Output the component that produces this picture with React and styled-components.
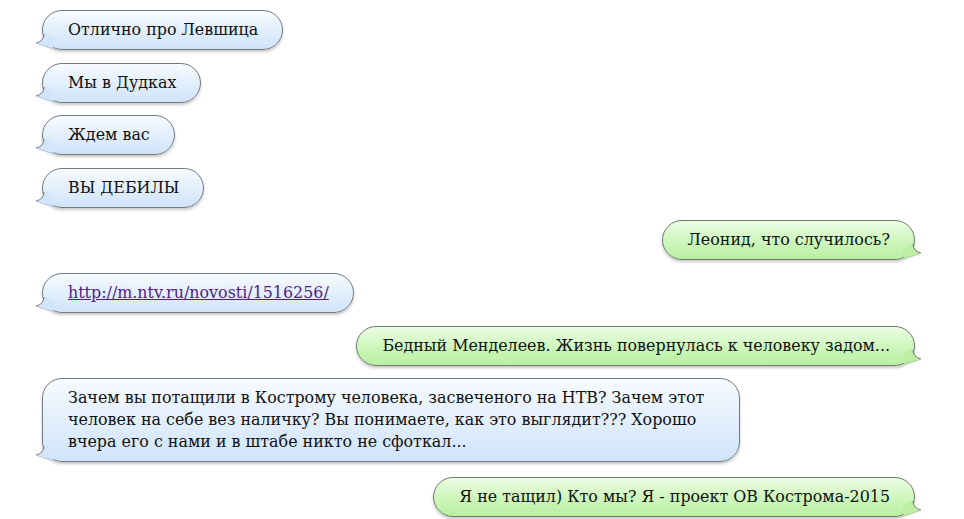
import React from "react";
import styled, {createGlobalStyle, css} from "styled-components";

const GlobalStyle = createGlobalStyle`
  html, body {
    margin: 0;
    padding: 0;
    background: #ffffff;
  }
`;

const Chat = styled.div`
  width: 964px;
  box-sizing: border-box;
  padding: 10px 49px 0 42px;
  display: flex;
  flex-direction: column;
  font-family: "DejaVu Serif", "Liberation Serif", serif;
  font-size: 15.9px;
  color: #111;
`;

const Row = styled.div`
  display: flex;
  justify-content: ${({$mine}) => ($mine ? "flex-end" : "flex-start")};
  margin-bottom: ${({$last}) => ($last ? "15px" : "12.6px")};
`;

const Bubble = styled.div`
  position: relative;
  box-sizing: border-box;
  min-width: ${({$minWidth}) => $minWidth || "0"};
  padding: 8px 24px 8px 25px;
  line-height: 22px;
  white-space: pre-line;
  border: 1px solid #757a80;
  border-radius: 20px;
  box-shadow: 0 2px 3px rgba(0, 0, 0, 0.22);

  ${({$mine}) =>
    $mine
      ? css`
          background: linear-gradient(to bottom, #ecfde4 0%, #d2f7c2 45%, #b9efa0 100%);
          border-color: #6f7a6c;
        `
      : css`
          background: linear-gradient(to bottom, #f8fbff 0%, #e4f0fd 45%, #d0e4fa 100%);
        `}

  a {
    color: #551a8b;
    text-decoration: underline;
  }
`;

const TailSvg = styled.svg`
  position: absolute;
  bottom: -1px;
  width: 24px;
  height: 16px;
  overflow: visible;
  ${({$mine}) =>
    $mine
      ? css`
          right: -8px;
          transform: scaleX(-1);
        `
      : css`
          left: -8px;
        `}
`;

const Tail = ({mine}) => {
  const fill = mine ? "#bcefa4" : "#d2e5fa";
  const line = mine ? "#6f7a6c" : "#757a80";
  return (
    <TailSvg $mine={mine} viewBox="0 0 24 16">
      <path d="M9 0 Q9 7 1 9 Q8 12 18 14.5 L20 6 L12 0 Z" fill={fill} />
      <path d="M9 0 Q9 7 1 9" fill="none" stroke={line} strokeWidth="1" />
      <path d="M1 9 Q8 12 18 14.5" fill="none" stroke={mine ? "#a9cf98" : "#b4c6da"} strokeWidth="1" />
    </TailSvg>
  );
};

const messages = [
  {text: "Отлично про Левшица"},
  {text: "Мы в Дудках"},
  {text: "Ждем вас"},
  {text: "ВЫ ДЕБИЛЫ"},
  {text: "Леонид, что случилось?", mine: true},
  {link: "http://m.ntv.ru/novosti/1516256/"},
  {text: "Бедный Менделеев. Жизнь повернулась к человеку задом...", mine: true},
  {
    text:
      "Зачем вы потащили в Кострому человека, засвеченого на НТВ? Зачем этот\nчеловек на себе вез наличку? Вы понимаете, как это выглядит??? Хорошо\nвчера его с нами и в штабе никто не сфоткал...",
    minWidth: "698px",
    last: true,
  },
  {text: "Я не тащил) Кто мы? Я - проект ОВ Кострома-2015", mine: true},
];

const App = () => {
  return (
    <>
      <GlobalStyle />
      <Chat>
        {messages.map((m, i) => (
          <Row key={i} $mine={m.mine} $last={m.last}>
            <Bubble $mine={m.mine} $minWidth={m.minWidth}>
              {m.link ? <a href={m.link}>{m.link}</a> : m.text}
              <Tail mine={m.mine} />
            </Bubble>
          </Row>
        ))}
      </Chat>
    </>
  );
};

export default App;
